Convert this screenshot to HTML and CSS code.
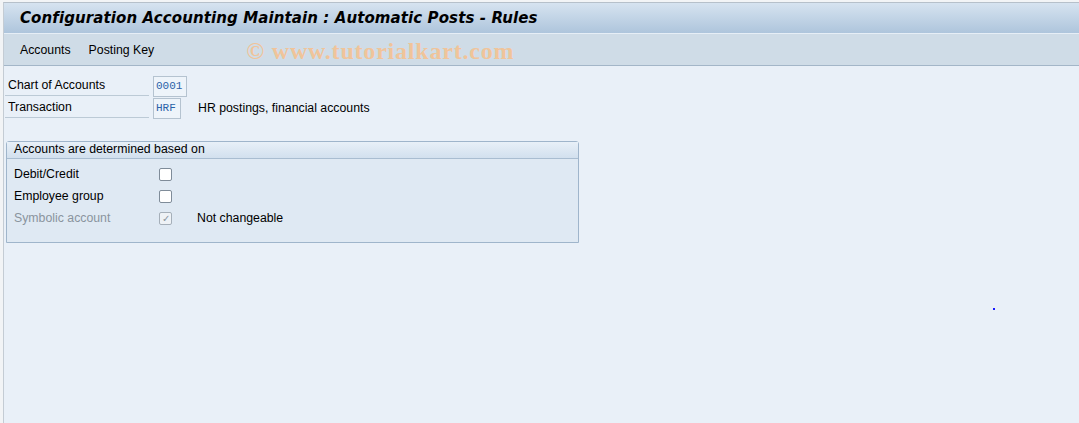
FILE: index.html
```html
<!DOCTYPE html>
<html lang="en">
<head>
    <meta charset="UTF-8">
    <title>Configuration Accounting Maintain : Automatic Posts - Rules</title>
    <link rel="stylesheet" href="styles.css">
</head>
<body>
    <div class="window">
        <div class="title-bar">
            <h1>Configuration Accounting Maintain : Automatic Posts - Rules</h1>
        </div>
        <div class="toolbar">
            <span class="menu-item">Accounts</span>
            <span class="menu-item">Posting Key</span>
            <span class="watermark">© www.tutorialkart.com</span>
        </div>
        <div class="content">
            <div class="field-row">
                <label class="field-label">Chart of Accounts</label>
                <span class="field-input wide">0001</span>
            </div>
            <div class="field-row">
                <label class="field-label">Transaction</label>
                <span class="field-input">HRF</span>
                <span class="field-text">HR postings, financial accounts</span>
            </div>

            <div class="group-box">
                <div class="group-title">Accounts are determined based on</div>
                <div class="check-row">
                    <span class="check-label">Debit/Credit</span>
                    <span class="checkbox"></span>
                </div>
                <div class="check-row">
                    <span class="check-label">Employee group</span>
                    <span class="checkbox"></span>
                </div>
                <div class="check-row">
                    <span class="check-label disabled">Symbolic account</span>
                    <span class="checkbox checked disabled">&#10003;</span>
                    <span class="check-note">Not changeable</span>
                </div>
            </div>
            <span class="cursor-dot"></span>
        </div>
    </div>
</body>
</html>
```

FILE: styles.css
```css
* {
    box-sizing: border-box;
    margin: 0;
    padding: 0;
}

body {
    font-family: 'Liberation Sans', Arial, sans-serif;
    font-size: 12.3px;
    color: #000;
    background-color: #f2f4f6;
    padding: 2px 0 0 3px;
    height: 423px;
    overflow: hidden;
}

.window {
    height: 100%;
    background-color: #e9f0f8;
    border-top: 1px solid #b6c0ca;
    border-left: 1px solid #c4ccd4;
}

.title-bar {
    height: 30px;
    display: flex;
    align-items: center;
    padding-left: 16px;
    background: linear-gradient(to bottom, #d6e3f0, #aec5dc);
}

.title-bar h1 {
    font-family: 'DejaVu Sans', Verdana, sans-serif;
    font-size: 15px;
    font-weight: bold;
    font-style: italic;
    letter-spacing: 0.1px;
    margin-top: -1px;
}

.toolbar {
    height: 33px;
    display: flex;
    align-items: center;
    padding-left: 16px;
    gap: 18px;
    background-color: #cfdce7;
    border-top: 1px solid #e6eef6;
    border-bottom: 1px solid #a3b6c8;
}

.watermark {
    margin-left: 74px;
    font-family: 'Liberation Serif', serif;
    font-weight: bold;
    font-size: 24px;
    letter-spacing: 0.8px;
    color: #f0c49a;
    margin-top: 4px;
}

.content {
    position: relative;
    padding: 9px 0 0 1px;
}

.field-row {
    display: flex;
    align-items: center;
    height: 22px;
}

.field-label {
    width: 144px;
    height: 20px;
    line-height: 19px;
    padding-left: 3px;
    border-bottom: 1px solid #bccad6;
    margin-right: 4px;
}

.field-input {
    width: 28px;
    height: 21px;
    line-height: 18px;
    border: 1px solid #b5c3d0;
    background-color: #eef4fa;
    color: #2a62a8;
    font-family: 'Liberation Mono', monospace;
    font-size: 11px;
    padding-left: 2px;
}

.field-input.wide {
    width: 34px;
}

.field-text {
    margin-left: 17px;
}

.group-box {
    margin: 22px 0 0 1px;
    width: 573px;
    height: 102px;
    border: 1px solid #9fb5cb;
    border-radius: 3px 3px 0 0;
    background-color: #dfe9f3;
}

.group-title {
    height: 17px;
    line-height: 15px;
    padding-left: 7px;
    background: linear-gradient(to bottom, #e8f0f8, #d2e0ee);
    border-bottom: 1px solid #a9bdd1;
    margin-bottom: 4px;
}

.check-row {
    display: flex;
    align-items: center;
    height: 22px;
}

.check-label {
    width: 152px;
    padding-left: 7px;
}

.check-label.disabled {
    color: #8a949e;
}

.checkbox {
    width: 13px;
    height: 13px;
    border: 1px solid #7f8c99;
    border-radius: 2px;
    background-color: #fff;
    font-size: 10px;
    line-height: 11px;
    text-align: center;
    color: #8a949e;
}

.checkbox.disabled {
    border-color: #a5afb9;
    background-color: #eef2f6;
}

.check-note {
    margin-left: 25px;
}

.cursor-dot {
    position: absolute;
    left: 989px;
    top: 242px;
    width: 2px;
    height: 2px;
    background-color: #1a1aff;
}
```
